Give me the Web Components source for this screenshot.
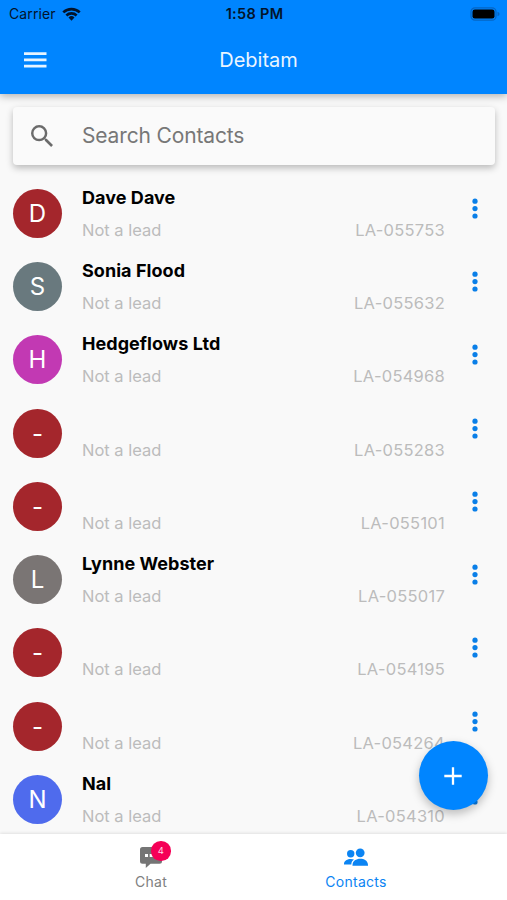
<!DOCTYPE html>
<html lang="en">
<head>
<meta charset="UTF-8">
<meta name="viewport" content="width=device-width, initial-scale=1.0">
<title>Debitam</title>
<style>
  body {
    margin: 0;
    height: 100vh;
    overflow: hidden;
    background: #f9f9f9;
    font-family: Inter, "Liberation Sans", sans-serif;
  }
</style>
</head>
<body>
<contacts-app></contacts-app>

<script>
class StatusBar extends HTMLElement {
  constructor() {
    super();
    const shadow = this.attachShadow({ mode: 'open' });
    shadow.innerHTML = `
      <style>
        :host {
          display: grid;
          grid-template-columns: 1fr auto 1fr;
          align-items: center;
          height: 27px;
          padding: 0 7px 0 9px;
          box-sizing: border-box;
          color: #03142b;
          font-size: 14px;
        }
        .carrier { display: flex; align-items: center; gap: 6px; letter-spacing: 0.1px; }
        .time { font-weight: 600; font-size: 14.5px; letter-spacing: 0.3px; }
        .battery { justify-self: end; }
        svg { display: block; }
      </style>
      <div class="carrier">
        <span>Carrier</span>
        <svg width="19" height="14" viewBox="0 0 20 15">
          <g fill="none" stroke="#03142b" stroke-width="2.8">
            <path d="M1.2 5.8a12.6 12.6 0 0 1 17.6 0"/>
            <path d="M4.5 9.1a7.9 7.9 0 0 1 11 0"/>
          </g>
          <path fill="#03142b" d="M10 14.6 6.8 11.3a4.6 4.6 0 0 1 6.4 0z"/>
        </svg>
      </div>
      <div class="time">1:58 PM</div>
      <svg class="battery" width="30" height="14" viewBox="0 0 30 14">
        <rect x="1" y="0.8" width="25" height="12.4" rx="4" fill="none" stroke="#0565c4" stroke-width="1.3"/>
        <rect x="2.5" y="2.5" width="22" height="9" rx="2.3" fill="#000"/>
        <path fill="#0565c4" d="M27.5 4.8c1.5.4 2 1.3 2 2.200s-.5 1.800-2 2.200z"/>
      </svg>
    `;
  }
}
customElements.define('status-bar', StatusBar);

class AppHeader extends HTMLElement {
  constructor() {
    super();
    const shadow = this.attachShadow({ mode: 'open' });
    shadow.innerHTML = `
      <style>
        :host {
          display: block;
          position: relative;
          z-index: 1;
          flex: none;
          height: 93.5px;
          background: #0085ff;
          box-shadow: 0 2px 8px rgba(0, 0, 0, 0.3);
        }
        .bar {
          display: grid;
          grid-template-columns: 70px 1fr 60px;
          align-items: center;
          height: 66px;
        }
        svg { display: block; margin-left: 24px; }
        h1 {
          margin: 0;
          color: #eaf5ff;
          font-size: 20px;
          font-weight: 400;
          text-align: center;
        }
      </style>
      <status-bar></status-bar>
      <div class="bar">
        <svg width="23" height="16" viewBox="0 0 23 16">
          <path fill="#e6f4ff" d="M0 0.2h22.5v2.7H0zM0 6.6h22.5v2.7H0zM0 12.8h22.5v2.7H0z"/>
        </svg>
        <h1><slot></slot></h1>
      </div>
    `;
  }
}
customElements.define('app-header', AppHeader);

class SearchBox extends HTMLElement {
  constructor() {
    super();
    const shadow = this.attachShadow({ mode: 'open' });
    shadow.innerHTML = `
      <style>
        :host {
          display: flex;
          flex: none;
          align-items: center;
          height: 58px;
          margin: 13px 12px 12.2px 13px;
          padding-left: 18px;
          gap: 29px;
          background: #fafafa;
          border-radius: 4px;
          box-shadow: 0 3px 7px rgba(0, 0, 0, 0.26);
          box-sizing: border-box;
          color: #777;
          font-size: 21px;
          letter-spacing: -0.15px;
        }
      </style>
      <svg width="22" height="22" viewBox="3 3 17.5 17.5">
        <path fill="#6b6b6b" d="M15.5 14h-.79l-.28-.27A6.471 6.471 0 0 0 16 9.5 6.5 6.5 0 1 0 9.5 16c1.61 0 3.09-.59 4.23-1.57l.27.28v.79l5 4.99L20.49 19l-4.99-5zm-6 0C7.01 14 5 11.99 5 9.5S7.01 5 9.5 5 14 7.01 14 9.5 11.99 14 9.5 14z"/>
      </svg>
      <span class="label"><slot></slot></span>
    `;
  }
}
customElements.define('search-box', SearchBox);

class ContactRow extends HTMLElement {
  constructor() {
    super();
    this.attachShadow({ mode: 'open' });
  }

  connectedCallback() {
    const name = this.getAttribute('name');
    this.shadowRoot.innerHTML = `
      <style>
        :host {
          display: flex;
          flex: none;
          height: 73.3px;
          padding: 0 29px 0 13px;
          box-sizing: border-box;
        }
        .avatar {
          display: flex;
          align-items: center;
          justify-content: center;
          width: 49px;
          height: 49px;
          margin-top: 12px;
          border-radius: 50%;
          background: ${this.getAttribute('color')};
          color: #fff;
          font-size: 24px;
        }
        .info { flex: 1; margin-left: 20px; padding-top: 9px; }
        .name {
          height: 24px;
          line-height: 24px;
          font-size: 18px;
          font-weight: 700;
          letter-spacing: 0.05px;
          color: #000;
        }
        .meta {
          display: flex;
          justify-content: space-between;
          margin-top: 8px;
          line-height: 24px;
          font-size: 16.5px;
          color: #bcbcbc;
        }
        .ref { letter-spacing: 0.25px; }
        .more { width: 6px; margin: 21px 0 0 27px; }
      </style>
      <div class="avatar">${name ? name[0] : '-'}</div>
      <div class="info">
        <div class="name">${name}</div>
        <div class="meta">
          <span class="status">Not a lead</span>
          <span class="ref">${this.getAttribute('ref')}</span>
        </div>
      </div>
      <svg class="more" width="6" height="21" viewBox="0 0 6 21">
        <g fill="#0a7fe8">
          <circle cx="3" cy="3.2" r="2.6"/>
          <circle cx="3" cy="10.6" r="2.6"/>
          <circle cx="3" cy="18" r="2.6"/>
        </g>
      </svg>
    `;
  }
}
customElements.define('contact-row', ContactRow);

class FabButton extends HTMLElement {
  constructor() {
    super();
    const shadow = this.attachShadow({ mode: 'open' });
    shadow.innerHTML = `
      <style>
        :host {
          position: absolute;
          right: 19.5px;
          bottom: 24px;
          display: flex;
          align-items: center;
          justify-content: center;
          width: 69px;
          height: 69px;
          border-radius: 50%;
          background: #0085ff;
          box-shadow: 0 4px 10px rgba(0, 0, 0, 0.25);
        }
      </style>
      <svg width="18" height="18" viewBox="0 0 18 18">
        <path fill="none" stroke="#fff" stroke-width="2.3" d="M9 0.3v17.4M0.3 9h17.4"/>
      </svg>
    `;
  }
}
customElements.define('fab-button', FabButton);

class TabItem extends HTMLElement {
  constructor() {
    super();
    const shadow = this.attachShadow({ mode: 'open' });
    shadow.innerHTML = `
      <style>
        :host {
          display: flex;
          flex-direction: column;
          align-items: center;
          width: 205px;
          color: #808080;
          font-size: 14px;
          letter-spacing: 0.3px;
        }
        :host([active]) { color: #0b84f3; }
        .icon { position: relative; height: 34px; margin-top: 6px; }
        .label { line-height: 16px; }
      </style>
      <div class="icon"><slot name="icon"></slot></div>
      <div class="label"><slot></slot></div>
    `;
  }
}
customElements.define('tab-item', TabItem);

class TabBar extends HTMLElement {
  constructor() {
    super();
    const shadow = this.attachShadow({ mode: 'open' });
    shadow.innerHTML = `
      <style>
        :host {
          display: flex;
          flex: none;
          justify-content: center;
          position: relative;
          height: 66px;
          background: #fff;
          box-shadow: 0 -1px 3px rgba(0, 0, 0, 0.1);
        }
        .icon { display: block; }
        .badge {
          position: absolute;
          top: 1.4px;
          left: 11px;
          width: 19.5px;
          height: 19.5px;
          border-radius: 50%;
          background: #f50057;
          color: #ffd9e6;
          font-size: 9.5px;
          line-height: 20px;
          text-align: center;
          letter-spacing: 0;
        }
      </style>
      <tab-item>
        <div slot="icon">
          <svg class="icon" width="22" height="34" viewBox="0 0 22 34">
            <path fill="#757575" d="M2.5 7h17a2.5 2.5 0 0 1 2.5 2.5v11.8a2.5 2.5 0 0 1-2.5 2.5h-9L5.8 28v-4.2H2.5A2.5 2.5 0 0 1 0 21.3V9.5A2.5 2.5 0 0 1 2.5 7z"/>
            <path fill="#fff" d="M5 14h3v3H5zM9.7 14h3v3h-3zM14.4 14h3v3h-3z"/>
          </svg>
          <span class="badge">4</span>
        </div>
        Chat
      </tab-item>
      <tab-item active>
        <svg slot="icon" class="icon" width="24" height="34" viewBox="0 0 24 34">
          <g fill="#0b84f3">
            <circle cx="6.7" cy="13.7" r="3.7"/>
            <circle cx="16.2" cy="12.8" r="4.4"/>
            <path d="M7.3 24.5H0v-.7c0-3.3 3.5-4.9 6.9-4.9 1.2 0 2.2.2 3.1.6-1.7 1.1-2.7 2.8-2.7 5z"/>
            <path d="M8.5 25.8c-.3-4.8 3.6-7 7.7-7s8 2.1 7.8 7z"/>
          </g>
        </svg>
        Contacts
      </tab-item>
    `;
  }
}
customElements.define('tab-bar', TabBar);

const contacts = [
  { name: 'Dave Dave', ref: 'LA-055753', color: '#a4262c' },
  { name: 'Sonia Flood', ref: 'LA-055632', color: '#69797e' },
  { name: 'Hedgeflows Ltd', ref: 'LA-054968', color: '#c239b3' },
  { name: '', ref: 'LA-055283', color: '#a4262c' },
  { name: '', ref: 'LA-055101', color: '#a4262c' },
  { name: 'Lynne Webster', ref: 'LA-055017', color: '#7a7574' },
  { name: '', ref: 'LA-054195', color: '#a4262c' },
  { name: '', ref: 'LA-054264', color: '#a4262c' },
  { name: 'Nal', ref: 'LA-054310', color: '#4f6bed' }
];

class ContactsApp extends HTMLElement {
  constructor() {
    super();
    const shadow = this.attachShadow({ mode: 'open' });
    shadow.innerHTML = `
      <style>
        :host {
          display: flex;
          flex-direction: column;
          height: 100vh;
        }
        main {
          position: relative;
          display: flex;
          flex-direction: column;
          flex: 1;
          min-height: 0;
          overflow: hidden;
        }
      </style>
      <app-header>Debitam</app-header>
      <main>
        <search-box>Search Contacts</search-box>
        ${contacts.map(c => `<contact-row name="${c.name}" ref="${c.ref}" color="${c.color}"></contact-row>`).join('')}
        <fab-button></fab-button>
      </main>
      <tab-bar></tab-bar>
    `;
  }
}
customElements.define('contacts-app', ContactsApp);
</script>
</body>
</html>
